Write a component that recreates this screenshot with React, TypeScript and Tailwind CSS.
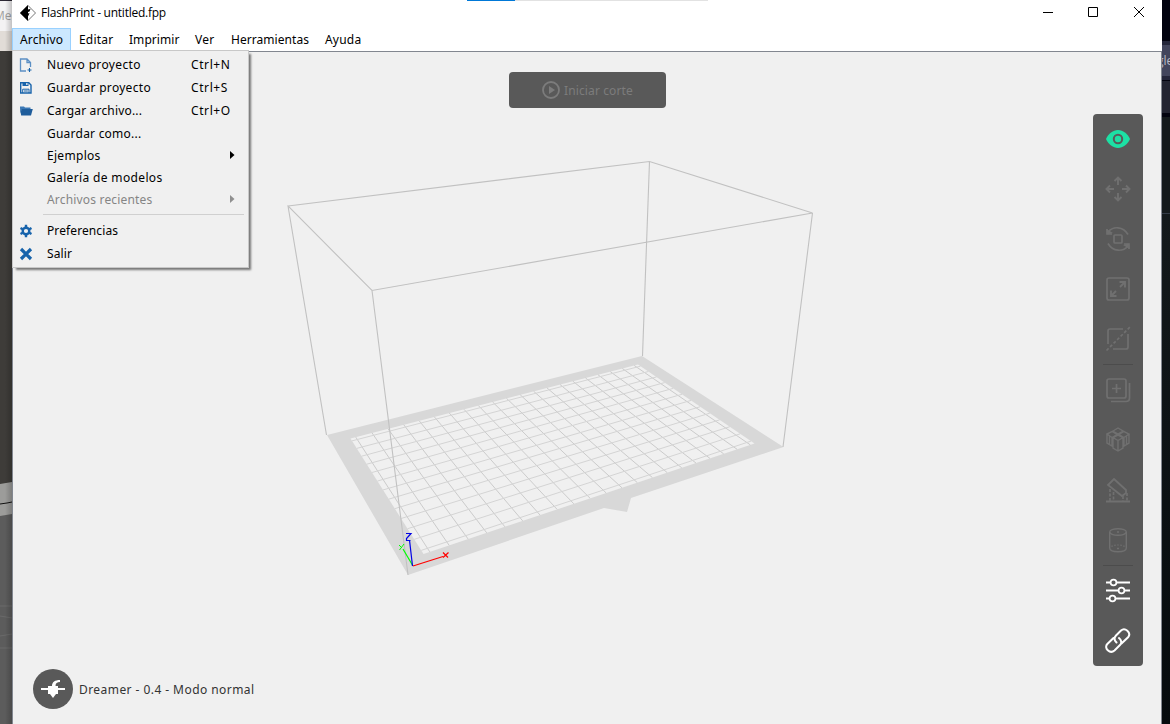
import type { ReactNode } from "react";

const UI = "font-['Noto_Sans','Noto_Sans_CJK_SC',sans-serif]";

type Pt = [number, number];

// Projective map from the unit square onto the visible bed.
function project(bl: Pt, br: Pt, fr: Pt, fl: Pt) {
  const dx1 = br[0] - fr[0], dx2 = fl[0] - fr[0], dx3 = bl[0] - br[0] + fr[0] - fl[0];
  const dy1 = br[1] - fr[1], dy2 = fl[1] - fr[1], dy3 = bl[1] - br[1] + fr[1] - fl[1];
  const det = dx1 * dy2 - dx2 * dy1;
  const g = (dx3 * dy2 - dx2 * dy3) / det;
  const h = (dx1 * dy3 - dx3 * dy1) / det;
  return (u: number, v: number): Pt => {
    const w = g * u + h * v + 1;
    return [
      ((br[0] - bl[0] + g * br[0]) * u + (fl[0] - bl[0] + h * fl[0]) * v + bl[0]) / w,
      ((br[1] - bl[1] + g * br[1]) * u + (fl[1] - bl[1] + h * fl[1]) * v + bl[1]) / w,
    ];
  };
}

const bed = project([350.5, 438.5], [638, 364.5], [754.5, 443.5], [423.5, 554]);
const seg = (a: Pt, b: Pt) => `M${a[0].toFixed(2)} ${a[1].toFixed(2)}L${b[0].toFixed(2)} ${b[1].toFixed(2)}`;
const columns = Array.from({ length: 21 }, (_, i) => {
  const u = (i + 0.32) / 20.64;
  return seg(bed(u, 0), bed(u, 1));
}).join("");
const rows = Array.from({ length: 13 }, (_, i) => {
  const v = (i + 0.32) / 12.64;
  return seg(bed(0, v), bed(1, v));
}).join("");

function Scene() {
  return (
    <svg className="absolute left-0 top-0" width="1149" height="672" viewBox="13 52 1149 672" fill="none">
      <path d="M327 435L642 356L783.5 447L631 498L627 512L604 508L408 575Z" fill="#d8d8d8" />
      <path d="M350.5 438.5L638 364.5L754.5 443.5L423.5 554Z" fill="#f0f0f0" />
      <path d={columns} stroke="#cbcbcb" />
      <path d={rows} stroke="#d4d4d4" />
      <path
        d="M288 206L649.5 161.5L812.5 213L372 290.5ZM288 206L326.5 435M649.5 161.5L642.5 356M812.5 213L783 447M372 290.5L408 575"
        stroke="#c1c1c1"
        strokeWidth="1.1"
      />
      <path d="M413 566L403 549" stroke="#00ff00" strokeWidth="1.2" />
      <path d="M399 545L401.5 547.5M404 544L399.5 550" stroke="#00ff00" />
      <path d="M413 566L443 556.5" stroke="#f00" strokeWidth="1.2" />
      <path d="M443 552.5L448 557.5M448.500 552.5L443 557.5" stroke="#f00" strokeWidth="1.2" />
      <path d="M412.500 566L409.500 540M406 533.5H411L406.500 538.5V540.500H410.500" stroke="#0000e6" strokeWidth="1.2" />
    </svg>
  );
}

const NewIcon = () => (
  <svg width="14" height="14" viewBox="0 0 14 14" fill="none" stroke="#5b8fc4">
    <path d="M7 13H1.500V1H8L11.500 4.500V9M8 1V4.500H11.500" strokeWidth="1.3" />
    <path d="M10.500 10V14M8.500 12H12.500" stroke="#1763ab" strokeWidth="1.1" />
  </svg>
);
const SaveIcon = () => (
  <svg width="14" height="14" viewBox="0 0 14 14" fill="none" stroke="#1763ab">
    <path d="M1.700 1.700H9.800L12 4V12H1.700Z" strokeWidth="1.4" />
    <path d="M3.500 1.500H9.500V5H3.500Z" fill="#1763ab" stroke="none" />
    <path d="M7.200 2H8.500V4H7.200Z" fill="#f0f0f0" stroke="none" />
    <path d="M3.700 12V8.200H10V12M5 10H8.800" />
  </svg>
);
const FolderIcon = () => (
  <svg width="14" height="14" viewBox="0 0 14 14" fill="#1f5d9b">
    <path d="M1 4V2.500H5L6 3.500H11.500V5H3.200L1.800 9.500Z" fill="#3b78b5" />
    <path d="M3 5H13.800L12 11.500H2.200L1 4.500L2 7Z" />
  </svg>
);
const GearIcon = () => (
  <svg width="14" height="14" viewBox="0 0 14 14" fill="none" stroke="#1763ab">
    <circle cx="7" cy="7" r="3.300" strokeWidth="2.400" />
    <path d="M7 .8V3M7 11V13.200M1.500 4L3.700 5.200M10.300 8.800L12.500 10M1.500 10L3.700 8.800M10.300 5.200L12.500 4" strokeWidth="2.400" />
  </svg>
);
const ExitIcon = () => (
  <svg width="14" height="14" viewBox="0 0 14 14">
    <path d="M2 2L12 12M12 2L2 12" stroke="#1763ab" strokeWidth="3.200" />
  </svg>
);

function Item({ icon, label, shortcut, arrow, muted, h, ls }: {
  icon?: ReactNode; label: string; shortcut?: string; arrow?: boolean; muted?: boolean; h: string; ls: string;
}) {
  return (
    <div className={`flex items-center ${h} ${muted ? "text-[#858585]" : "text-black"}`}>
      <span className="flex w-[28px] justify-start">{icon}</span>
      <span className={`w-[144px] ${ls}`}>{label}</span>
      {shortcut && <span className="tracking-[0.6px]">{shortcut}</span>}
      {arrow && (
        <svg className="mb-[2px] ml-[39px]" width="5" height="8" viewBox="0 0 5 8">
          <path d="M0 0L4.500 4L0 8Z" fill={muted ? "#8f8f8f" : "#000"} />
        </svg>
      )}
    </div>
  );
}

function Menu() {
  return (
    <div className={`absolute left-[12px] top-[50px] flex h-[218px] w-[237px] flex-col border border-[#c8c8c8] bg-[#f0f0f0] pl-[6px] pt-[2px] text-[12px] leading-[20px] shadow-[3px_3px_2px_-1px_#777] ${UI}`}>
      <Item h="h-[23px]" ls="tracking-[0.35px]" icon={<NewIcon />} label="Nuevo proyecto" shortcut="Ctrl+N" />
      <Item h="h-[23px]" ls="tracking-[0.3px]" icon={<SaveIcon />} label="Guardar proyecto" shortcut="Ctrl+S" />
      <Item h="h-[23px]" ls="tracking-[0.18px]" icon={<FolderIcon />} label="Cargar archivo..." shortcut="Ctrl+O" />
      <Item h="mt-px h-[22px]" ls="tracking-[0.23px]" label="Guardar como..." />
      <Item h="h-[22px]" ls="tracking-[0.3px]" label="Ejemplos" arrow />
      <Item h="h-[22px]" ls="tracking-[0.35px]" label="Galería de modelos" />
      <Item h="h-[22px]" ls="tracking-[0.18px]" label="Archivos recientes" arrow muted />
      <div className="mb-[4px] ml-[24px] mr-[4px] mt-[3px] h-px shrink-0 bg-[#d0d0d0]" />
      <Item h="h-[23px]" ls="tracking-[0.1px]" icon={<GearIcon />} label="Preferencias" />
      <Item h="h-[23px]" ls="tracking-[0.1px]" icon={<ExitIcon />} label="Salir" />
    </div>
  );
}

function Tool({ children, active }: { children: ReactNode; active?: boolean }) {
  return (
    <div className={`flex h-[50px] w-[50px] shrink-0 items-center justify-center ${active ? "text-white" : "text-[#707070]"}`}>
      <svg width="26" height="26" viewBox="0 0 26 26" fill="none" stroke="currentColor" strokeWidth="1.700">
        {children}
      </svg>
    </div>
  );
}

function Toolbar() {
  return (
    <div className="absolute left-[1080px] top-[62px] flex h-[552px] w-[50px] flex-col rounded-[4px] bg-[#595959]">
      <Tool>
        <path d="M1 13C3.500 7.500 8 4 13 4S22.500 7.500 25 13C22.500 18.500 18 22 13 22S3.500 18.500 1 13Z" fill="#1de0a4" stroke="none" />
        <circle cx="13" cy="13" r="4.200" stroke="#595959" strokeWidth="2" />
      </Tool>
      <Tool>
        <path d="M13 9V2M9.500 5L13 1.500L16.500 5M13 17V24M9.500 21L13 24.500L16.500 21M9 13H2M5 9.500L1.500 13L5 16.500M17 13H24M21 9.500L24.500 13L21 16.500" strokeWidth="1.900" />
      </Tool>
      <Tool>
        <rect x="9" y="9" width="8" height="8" rx="1" />
        <path d="M3 6C8 0 18 0 23 8.500M23 20C18 26 8 26 3 17.500" />
        <path d="M1.500 3L2.500 8.500L8 7Z M24.500 23L23.500 17.500L18 19Z" fill="currentColor" stroke="none" />
        <path d="M2 3V8H7M24 23V18H19" />
      </Tool>
      <Tool>
        <rect x="2" y="2" width="22" height="22" rx="2" />
        <path d="M15 11L19.500 6.500M14.500 6H20V11.500M11 15L6.500 19.500M11.500 20H6V14.500" strokeWidth="1.900" />
      </Tool>
      <Tool>
        <path d="M18 3H5Q3 3 3 5V18M8 23H21Q23 23 23 21V8" />
        <path d="M1.500 24.500L25 1" strokeDasharray="3 2" />
      </Tool>
      <div className="mx-[10px] h-px shrink-0 bg-[#4c4c4c]" />
      <Tool>
        <rect x="2" y="2" width="19" height="19" rx="2" />
        <path d="M11.500 7V16M7 11.500H16M6 24.500H21Q24.500 24.500 24.500 21V6" />
      </Tool>
      <Tool>
        <path d="M8 4L13 1L18 4L13 7ZM2 7L7 4.500L12 7.500L7 10.500ZM14 7.500L19 4.500L24 7L19 10.500ZM8 10.500L13 8L18 10.500L13 13.500ZM2 7V16L7 19V10.500M24 7V16L19 19V10.500M8 10.500V21L13 24L18 21V10.500M13 13.500V24M4.500 9V17M21.500 9V17" strokeWidth="1.400" />
      </Tool>
      <Tool>
        <path d="M9 2L21 13V16L17 19L3 8ZM1 24.500H25" strokeWidth="1.800" />
        <path d="M5 12V24M8.500 15V24M18 19V24M22 16V24" strokeDasharray="3 1.500" />
      </Tool>
      <Tool>
        <ellipse cx="13" cy="5" rx="8.300" ry="3.300" strokeWidth="1.400" />
        <path d="M4.700 5V21C4.700 26 21.300 26 21.300 21V5M12 5H14M12 21.500H14" strokeWidth="1.400" />
        <path d="M6.500 19.500C9 17.500 17 17.500 19.500 19.500" strokeDasharray="1.500 1.500" strokeWidth="1.200" />
      </Tool>
      <div className="mx-[10px] h-px shrink-0 bg-[#4c4c4c]" />
      <Tool active>
        <path d="M1 4.500H5.500M11.500 4.500H25M1 12.500H13.500M19.500 12.500H25M1 20.500H4.500M10.500 20.500H25" strokeWidth="2" />
        <circle cx="8.500" cy="4.500" r="2.900" />
        <circle cx="16.500" cy="12.500" r="2.900" />
        <circle cx="7.500" cy="20.500" r="2.900" />
      </Tool>
      <Tool active>
        <path
          d="M11.500 14.500C9 12 9 9.500 11 7.500L16 2.500C20 -1 26.500 4.500 23.300 9L16.500 15.500M14 10C16.500 12 17 15 15 17L9.500 22.500C5 26.500 -1.500 20 2.300 16L8.500 10"
          strokeWidth="2"
          strokeLinecap="round"
        />
      </Tool>
    </div>
  );
}

function LeftDesktop() {
  return (
    <div className="relative w-[12px] shrink-0 overflow-hidden bg-[#5c5c5c]">
      <div className="h-px bg-[#2c2733]" />
      <div className="h-[30px] overflow-hidden bg-[#f3f2f3] pt-[6px] font-['Open_Sans',sans-serif] text-[12px] leading-[18px] text-[#a0a0a0]">
        <span className="-ml-[6px]">Me</span>
      </div>
      <div className="h-[20px] bg-[#e1dcd7]" />
      <svg className="block" width="12" height="673" viewBox="0 51 12 673">
        <path d="M0 51H12V484H0Z" fill="#3e3c39" />
        <path d="M0 484L12 482V514L0 516Z" fill="#9c9c9a" />
        <path d="M0 504L7 503L12 502" stroke="#111" fill="none" />
        <path d="M0 606H12M0 616L12 618M0 636L12 634M0 648H12" stroke="#6a6a6a" fill="none" />
      </svg>
      <div className="absolute right-0 top-0 h-full w-[7px] bg-linear-to-r from-transparent to-black/20" />
    </div>
  );
}

function RightDesktop() {
  return (
    <div className="flex w-[8px] shrink-0 flex-col overflow-hidden bg-[#13191c]">
      <div className="h-[41px] bg-[#02030f]" />
      <div className="h-[4px] bg-[#24263a]" />
      <div className="h-[31px] overflow-hidden bg-[#42455c] pt-[7px] font-['Open_Sans',sans-serif] text-[12px] leading-[18px] text-[#bbbcc4]">
        <span className="-ml-[5px]">gle</span>
      </div>
      <div className="h-[4px] bg-[#24263a]" />
      <div className="h-px bg-[#02030f]" />
      <div className="h-[32px] bg-[#222431]" />
      <div className="h-[4px] bg-[#02030f]" />
      <div className="h-[96px] bg-[#141a1d]" />
      <div className="h-px bg-[#333b47]" />
      <div className="flex-1 bg-linear-to-b from-[#13191c] to-[#060b0e]" />
    </div>
  );
}

export default function App() {
  return (
    <div className="relative flex h-[724px] w-[1170px] overflow-hidden bg-white">
      <LeftDesktop />
      <div className="flex w-[1150px] flex-col">
        <header className="relative flex h-[28px] items-start justify-between bg-white">
          <div className="absolute left-[455px] top-0 flex h-px w-[241px] bg-[#e2e2e2]">
            <div className="w-[48px] bg-[#0078d7]" />
          </div>
          <div className="flex h-[25px] items-center pl-[8px]">
            <svg width="16" height="16" viewBox="0 0 16 16">
              <path d="M8 .5L15.500 8L8 15.500L.5 8Z" fill="#fff" stroke="#777" />
              <path d="M8 0V4.500L10.500 4L9.500 6.500L8 7V8.500L9.500 8L8.500 10.500L8 11V16L0 8Z" fill="#000" />
            </svg>
            <span className="ml-[5px] font-['Open_Sans',sans-serif] text-[12px] leading-[18px] tracking-[-0.25px] text-black">FlashPrint - untitled.fpp</span>
          </div>
          <svg className="mr-[17px] mt-[6px]" width="102" height="13" viewBox="0 0 102 13" fill="none" stroke="#000">
            <path d="M0 6.500H10M45.500 1.500H54.500V10.500H45.500ZM91 1L101 11M101 1L91 11" />
          </svg>
        </header>
        <nav className={`flex h-[23px] items-start bg-white text-[12px] leading-[21px] text-black ${UI}`}>
          <span className="h-[23px] w-[59px] border border-[#99d1ff] bg-[#cce8ff] pl-[7px] tracking-[0.15px]">Archivo</span>
          <span className="w-[50px] pl-[8px] pt-px tracking-[0.2px]">Editar</span>
          <span className="w-[66px] pl-[8px] pt-px tracking-[0.05px]">Imprimir</span>
          <span className="w-[36px] pl-[8px] pt-px tracking-[0.3px]">Ver</span>
          <span className="w-[94px] pl-[8px] pt-px tracking-[0.05px]">Herramientas</span>
          <span className="pl-[8px] pt-px tracking-[0.2px]">Ayuda</span>
        </nav>
        <main className="relative flex-1 border-l border-r border-t border-[#828790] bg-[#f0f0f0]">
          <Scene />
          <div className={`absolute left-[496px] top-[20px] flex h-[36px] w-[157px] items-center rounded-[4px] bg-[#595959] pl-[33px] text-[12px] text-[#7c7c7c] ${UI}`}>
            <svg width="18" height="18" viewBox="0 0 18 18">
              <circle cx="9" cy="9" r="8" fill="none" stroke="#7c7c7c" strokeWidth="1.800" />
              <path d="M7 5L13 9L7 13Z" fill="#7c7c7c" />
            </svg>
            <span className="ml-[4px] pt-[2px] tracking-[0.12px]">Iniciar corte</span>
          </div>
          <Toolbar />
          <div className={`absolute left-[20px] top-[617px] flex h-[40px] items-center text-[12px] text-[#333] ${UI}`}>
            <svg width="40" height="40" viewBox="0 0 40 40">
              <circle cx="20" cy="20" r="20" fill="#595959" />
              <path d="M8 19H15V17H19C19 13 22 11 27 11V13C24 13 22.500 14 22.500 17H25V19H32V21H25V25H23L20 29L17 25H15V21H8Z" fill="#fff" />
            </svg>
            <span className="ml-[6px] pt-[2px] tracking-[0.44px]">Dreamer - 0.4 - Modo normal</span>
          </div>
        </main>
      </div>
      <RightDesktop />
      <Menu />
    </div>
  );
}
